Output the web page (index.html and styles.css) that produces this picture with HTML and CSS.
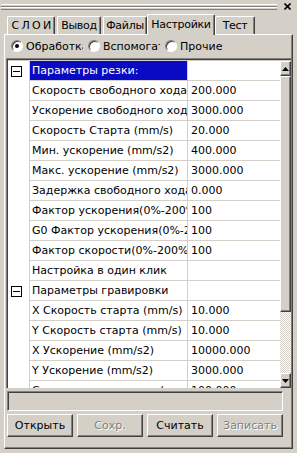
FILE: index.html
```html
<!DOCTYPE html>
<html lang="ru">
<head>
    <meta charset="UTF-8">
    <title>Настройки</title>
    <link rel="stylesheet" href="styles.css">
</head>
<body>
    <div class="window">
        <!-- title grip with close cross -->
        <div class="grip">
            <div class="grip-lines"><span></span><span></span></div>
            <svg class="close" width="7" height="7" viewBox="0 0 7 7">
                <path d="M0.5 0.5 L6.5 6.5 M6.5 0.5 L0.5 6.5" stroke="#000" stroke-width="1.6"/>
            </svg>
        </div>

        <div class="tabs">
            <div class="tab tab-layers">С Л О И</div>
            <div class="tab tab-out">Вывод</div>
            <div class="tab tab-files">Файлы</div>
            <div class="tab tab-set active">Настройки</div>
            <div class="tab tab-test">Тест</div>
        </div>

        <div class="panel">
            <div class="radios">
                <label class="radio"><span class="dot checked"></span><span class="rtext">Обработка</span></label>
                <label class="radio"><span class="dot"></span><span class="rtext">Вспомогательные</span></label>
                <label class="radio"><span class="dot"></span><span class="rtext">Прочие</span></label>
            </div>

            <div class="grid">
                <div class="rows">
                    <table>
                        <tr class="group selected"><td class="gut"><span class="box"></span></td><td class="name"><div>Параметры резки:</div></td><td class="val"></td></tr>
                        <tr><td class="gut"></td><td class="name"><div>Скорость свободного хода</div></td><td class="val">200.000</td></tr>
                        <tr><td class="gut"></td><td class="name"><div>Ускорение свободного хода</div></td><td class="val">3000.000</td></tr>
                        <tr><td class="gut"></td><td class="name"><div>Скорость Старта (mm/s)</div></td><td class="val">20.000</td></tr>
                        <tr><td class="gut"></td><td class="name"><div>Мин. ускорение (mm/s2)</div></td><td class="val">400.000</td></tr>
                        <tr><td class="gut"></td><td class="name"><div>Макс. ускорение (mm/s2)</div></td><td class="val">3000.000</td></tr>
                        <tr><td class="gut"></td><td class="name"><div>Задержка свободного хода</div></td><td class="val">0.000</td></tr>
                        <tr><td class="gut"></td><td class="name"><div>Фактор ускорения(0%-200%)</div></td><td class="val">100</td></tr>
                        <tr><td class="gut"></td><td class="name"><div>G0 Фактор ускорения(0%-200%)</div></td><td class="val">100</td></tr>
                        <tr><td class="gut"></td><td class="name"><div>Фактор скорости(0%-200%)</div></td><td class="val">100</td></tr>
                        <tr><td class="gut"></td><td class="name"><div>Настройка в один клик</div></td><td class="val"></td></tr>
                        <tr class="group"><td class="gut"><span class="box"></span></td><td class="name"><div>Параметры гравировки</div></td><td class="val"></td></tr>
                        <tr><td class="gut"></td><td class="name"><div>X Скорость старта (mm/s)</div></td><td class="val">10.000</td></tr>
                        <tr><td class="gut"></td><td class="name"><div>Y Скорость старта (mm/s)</div></td><td class="val">10.000</td></tr>
                        <tr><td class="gut"></td><td class="name"><div>X Ускорение (mm/s2)</div></td><td class="val">10000.000</td></tr>
                        <tr><td class="gut"></td><td class="name"><div>Y Ускорение (mm/s2)</div></td><td class="val">3000.000</td></tr>
                        <tr><td class="gut"></td><td class="name"><div>Скорость гравировки (mm/s)</div></td><td class="val">100.000</td></tr>
                    </table>
                </div>
                <div class="scrollbar">
                    <div class="sb-btn"><svg width="7" height="4" viewBox="0 0 7 4"><path d="M3.5 0 L7 4 L0 4 Z" fill="#000"/></svg></div>
                    <div class="sb-thumb"></div>
                    <div class="sb-track"></div>
                    <div class="sb-btn"><svg width="7" height="4" viewBox="0 0 7 4"><path d="M0 0 L7 0 L3.5 4 Z" fill="#000"/></svg></div>
                </div>
            </div>

            <div class="status"></div>

            <div class="buttons">
                <button>Открыть</button>
                <button disabled>Сохр.</button>
                <button>Считать</button>
                <button disabled>Записать</button>
            </div>
        </div>
    </div>
</body>
</html>
```

FILE: styles.css
```css
body {
    margin: 0;
    background: #d4d0c8;
    font-family: 'DejaVu Sans', sans-serif;
    font-size: 11px;
    color: #000;
}
.window {
    width: 297px;
    height: 453px;
    overflow: hidden;
}
.grip {
    display: flex;
    align-items: center;
    height: 13px;
    padding: 0 6px 0 1px;
    gap: 7px;
}
.grip-lines {
    flex: 1;
    display: flex;
    flex-direction: column;
}
.grip-lines span {
    height: 1px;
    border-top: 1px solid #fff;
    border-bottom: 1px solid #808080;
}
.close {
    display: block;
}
.tabs {
    display: flex;
    align-items: flex-end;
    height: 21px;
    padding-left: 7px;
}
.tab {
    box-sizing: border-box;
    height: 18px;
    line-height: 17px;
    text-align: center;
    margin-right: 2px;
    border-top: 1px solid #fff;
    border-left: 1px solid #fff;
    border-right: 1px solid #404040;
    box-shadow: inset -1px 0 #808080;
    border-radius: 2px 2px 0 0;
    white-space: nowrap;
    letter-spacing: -0.3px;
}
.tab-layers { width: 48px; letter-spacing: -0.6px; }
.tab-out { width: 44px; }
.tab-files { width: 44px; }
.tab-test { width: 40px; }
.tab.active {
    position: relative;
    height: 21px;
    line-height: 19px;
    margin: 0 0 -1px -2px;
    width: 68px;
    background: #d4d0c8;
    z-index: 1;
}
.panel {
    margin-left: 4px;
    width: 286px;
    height: 413px;
    border-top: 1px solid #fff;
    border-left: 1px solid #fff;
    border-right: 1px solid #404040;
    border-bottom: 1px solid #404040;
    box-shadow: inset -1px -1px #808080;
    display: flex;
    flex-direction: column;
    padding-left: 1px;
}
.radios {
    display: flex;
    height: 22px;
    align-items: center;
    padding-left: 5px;
}
.radio {
    display: flex;
    align-items: center;
    width: 77px;
    white-space: nowrap;
}
.rtext {
    width: 57px;
    overflow: hidden;
}
.dot {
    flex: none;
    box-sizing: border-box;
    width: 12px;
    height: 12px;
    border-radius: 50%;
    background: #fff;
    border: 1px solid;
    border-color: #808080 #fff #fff #808080;
    box-shadow: inset 1px 1px #404040;
    margin-right: 3px;
    position: relative;
}
.dot.checked::after {
    content: '';
    position: absolute;
    left: 3px;
    top: 3px;
    width: 4px;
    height: 4px;
    border-radius: 50%;
    background: #000;
}
.grid {
    display: flex;
    height: 327px;
    margin-top: 1px;
    border-top: 1px solid #808080;
    border-left: 1px solid #808080;
    box-shadow: inset 1px 1px #404040;
    padding: 2px 0 0 1px;
    overflow: hidden;
    width: 283px;
}
.rows {
    width: 272px;
    overflow: hidden;
    background: #fff;
}
table {
    border-collapse: collapse;
    table-layout: fixed;
    width: 272px;
    background: #fff;
}
td {
    height: 19px;
    padding: 0;
    white-space: nowrap;
    border-bottom: 1px solid #d4d0c8;
}
td.gut {
    width: 21px;
    border-bottom: none;
    border-right: 1px solid #d4d0c8;
}
td.name {
    width: 157px;
    border-right: 1px solid #d4d0c8;
}
td.name div {
    width: 155px;
    padding-left: 2px;
    overflow: hidden;
}
td.val {
    padding-left: 3px;
    overflow: hidden;
}
.selected td.name {
    background: #0a0ac4;
    color: #fff;
}
.box {
    display: block;
    width: 11px;
    height: 11px;
    margin: 2px 0 0 3px;
    border: 1px solid #000;
    box-sizing: border-box;
    position: relative;
}
.box::after {
    content: '';
    position: absolute;
    left: 1px;
    right: 1px;
    top: 4px;
    height: 1px;
    background: #000;
}
.scrollbar {
    width: 11px;
    display: flex;
    flex-direction: column;
}
.sb-btn, .sb-thumb {
    background: #d4d0c8;
    border-top: 1px solid #fff;
    border-left: 1px solid #fff;
    border-right: 1px solid #404040;
    border-bottom: 1px solid #404040;
    box-shadow: inset -1px -1px #808080;
}
.sb-btn {
    height: 13px;
    display: flex;
    align-items: center;
    justify-content: center;
}
.sb-thumb {
    height: 234px;
}
.sb-track {
    flex: 1;
    background: repeating-conic-gradient(#fff 0 25%, #d4d0c8 0 50%) 0 0 / 2px 2px;
}
.status {
    margin: 3px 0 0 1px;
    width: 274px;
    height: 18px;
    border-top: 1px solid #808080;
    border-left: 1px solid #808080;
    border-right: 1px solid #fff;
    border-bottom: 1px solid #fff;
    box-shadow: inset 1px 1px #404040;
}
.buttons {
    display: flex;
    gap: 4px;
    margin: 3px 0 0 1px;
    width: 276px;
}
button {
    flex: 1;
    height: 23px;
    padding: 0;
    background: #d4d0c8;
    font-family: 'DejaVu Sans', sans-serif;
    font-size: 11px;
    color: #000;
    border-top: 1px solid #fff;
    border-left: 1px solid #fff;
    border-right: 1px solid #404040;
    border-bottom: 1px solid #404040;
    box-shadow: inset -1px -1px #808080;
}
button:disabled {
    color: #808080;
    text-shadow: 1px 1px #fff;
}
```
